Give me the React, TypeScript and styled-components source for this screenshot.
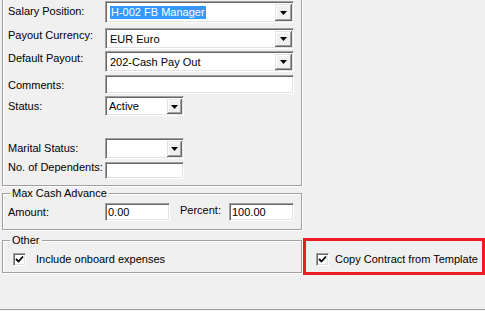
import styled, { createGlobalStyle } from "styled-components";

const GlobalStyle = createGlobalStyle`
  html, body {
    margin: 0;
    padding: 0;
    background: #f0f0f0;
  }
  body {
    color: #000;
    font-family: "Liberation Sans", Arial, sans-serif;
    font-size: 11px;
  }
`;

const Arrow = () => (
    <svg width="7" height="4" viewBox="0 0 7 4">
        <polygon points="0,0 7,0 3.5,4" fill="#000"/>
    </svg>
);

const Check = () => (
    <svg width="9" height="9" viewBox="0 0 9 9">
        <polyline points="1,4 3.5,6.5 8,1.5" fill="none" stroke="#000" strokeWidth="1.8"/>
    </svg>
);

const App = () => {
    return (
        <>
            <GlobalStyle/>
            <Page>
                <MainGroup>
                    <Row $mt={1} $h={22}>
                        <Label $mt={4}>Salary Position:</Label>
                        <Combo $w={189}>
                            <ComboText><Selected>H-002 FB Manager</Selected></ComboText>
                            <DropButton $w={17}><Arrow/></DropButton>
                        </Combo>
                    </Row>
                    <Row $mt={5} $h={21}>
                        <Label $mt={1}>Payout Currency:</Label>
                        <Combo $w={189}>
                            <ComboText>EUR Euro</ComboText>
                            <DropButton $w={17}><Arrow/></DropButton>
                        </Combo>
                    </Row>
                    <Row $mt={2} $h={21}>
                        <Label $mt={1}>Default Payout:</Label>
                        <Combo $w={189}>
                            <ComboText>202-Cash Pay Out</ComboText>
                            <DropButton $w={17}><Arrow/></DropButton>
                        </Combo>
                    </Row>
                    <Row $mt={3} $h={19}>
                        <Label $mt={4}>Comments:</Label>
                        <TextBox $w={189}/>
                    </Row>
                    <Row $mt={2} $h={20}>
                        <Label $mt={4}>Status:</Label>
                        <Combo $w={79}>
                            <ComboText $pad={1}>Active</ComboText>
                            <DropButton $w={15}><Arrow/></DropButton>
                        </Combo>
                    </Row>
                    <Row $mt={22} $h={21}>
                        <Label $mt={4}>Marital Status:</Label>
                        <Combo $w={79}>
                            <ComboText/>
                            <DropButton $w={15}><Arrow/></DropButton>
                        </Combo>
                    </Row>
                    <Row $mt={3} $h={17}>
                        <Label $mt={-1}>No. of Dependents:</Label>
                        <TextBox $w={79}/>
                    </Row>
                </MainGroup>

                <Group $mt={1}>
                    <Legend>Max Cash Advance</Legend>
                    <AdvanceRow>
                        <Label $mt={3}>Amount:</Label>
                        <TextBox $w={65}>0.00</TextBox>
                        <SideLabel $mt={1}>Percent:</SideLabel>
                        <TextBox $w={65}>100.00</TextBox>
                    </AdvanceRow>
                </Group>

                <BottomRow>
                    <Group $mt={0}>
                        <Legend>Other</Legend>
                        <OtherBody>
                            <CheckRow $gap={10}>
                                <CheckBox><Check/></CheckBox>
                                <span>Include onboard expenses</span>
                            </CheckRow>
                        </OtherBody>
                    </Group>
                    <Highlight>
                        <CheckRow $gap={6}>
                            <CheckBox><Check/></CheckBox>
                            <span>Copy Contract from Template</span>
                        </CheckRow>
                    </Highlight>
                </BottomRow>
            </Page>
        </>
    )
}

const Page = styled.div`
  border-bottom: 1px solid #a0a0a0;
  box-shadow: 0 1px 0 #fff;
  box-sizing: border-box;
  display: flex;
  flex-direction: column;
  height: 310px;
  padding-left: 2px;
  width: 485px;
`

const MainGroup = styled.div`
  border: 1px solid #a0a0a0;
  border-top: none;
  box-shadow: inset 1px 0 0 #fff, 1px 1px 0 #fff;
  box-sizing: border-box;
  display: flex;
  flex-direction: column;
  height: 186px;
  padding-left: 5px;
  width: 300px;
`

const Row = styled.div<{ $mt: number; $h: number }>`
  align-items: flex-start;
  display: flex;
  flex: none;
  height: ${p => p.$h}px;
  margin-top: ${p => p.$mt}px;

  & > :last-child {
    height: ${p => p.$h}px;
  }
`

const Label = styled.div<{ $mt: number }>`
  flex: none;
  line-height: 13px;
  margin-top: ${p => p.$mt}px;
  white-space: nowrap;
  width: 97px;
`

const SideLabel = styled(Label)`
  margin-left: 10px;
  width: 49px;
`

const sunken = `
  background: #fff;
  border-top: 1px solid #a0a0a0;
  border-left: 1px solid #a0a0a0;
  border-bottom: 1px solid #fff;
  border-right: 1px solid #fff;
  box-shadow: inset 1px 1px 0 #696969, inset -1px -1px 0 #e3e3e3;
  box-sizing: border-box;
`

const Combo = styled.div<{ $w: number }>`
  ${sunken};
  align-items: stretch;
  display: flex;
  flex: none;
  padding: 2px 1px 1px 2px;
  width: ${p => p.$w}px;
`

const ComboText = styled.div<{ $pad?: number }>`
  align-items: center;
  display: flex;
  flex: 1;
  line-height: 13px;
  padding-left: ${p => p.$pad ?? 2}px;
  white-space: nowrap;
`

const Selected = styled.span`
  background: #3399ff;
  color: #fff;
  padding: 0 1px;
`

const DropButton = styled.div<{ $w: number }>`
  align-items: center;
  background: #f0f0f0;
  box-shadow: inset -1px -1px 0 #696969, inset 1px 1px 0 #e3e3e3, inset -2px -2px 0 #a0a0a0, inset 2px 2px 0 #fff;
  display: flex;
  flex: none;
  justify-content: center;
  width: ${p => p.$w}px;

  svg {
    display: block;
  }
`

const TextBox = styled.div<{ $w: number }>`
  ${sunken};
  align-items: center;
  display: flex;
  flex: none;
  height: 18px;
  line-height: 13px;
  padding-left: 2px;
  width: ${p => p.$w}px;
`

const Group = styled.fieldset<{ $mt: number }>`
  border: 1px solid #a0a0a0;
  box-shadow: inset 1px 1px 0 #fff, 1px 1px 0 #fff;
  box-sizing: border-box;
  margin: ${p => p.$mt}px 0 0 0;
  min-inline-size: 0;
  padding: 0;
  width: 300px;
`

const Legend = styled.legend`
  background: #f0f0f0;
  line-height: 13px;
  margin-left: 7px;
  padding: 0 2px;
`

const AdvanceRow = styled.div`
  align-items: flex-start;
  display: flex;
  height: 18px;
  padding: 3px 0 8px 5px;
`

const OtherBody = styled.div`
  padding: 6px 0 6px 10px;
`

const BottomRow = styled.div`
  align-items: flex-start;
  display: flex;
  margin-top: 4px;
`

const CheckRow = styled.div<{ $gap: number }>`
  align-items: center;
  display: flex;
  gap: ${p => p.$gap}px;
  line-height: 13px;
  white-space: nowrap;
`

const CheckBox = styled.div`
  ${sunken};
  align-items: center;
  display: flex;
  flex: none;
  height: 13px;
  justify-content: center;
  width: 13px;

  svg {
    display: block;
  }
`

const Highlight = styled.div`
  border: 3px solid #ed1c24;
  box-sizing: border-box;
  height: 37px;
  margin: 4px 0 0 1px;
  padding: 12px 0 0 10px;
  width: 182px;
`

export default App;
